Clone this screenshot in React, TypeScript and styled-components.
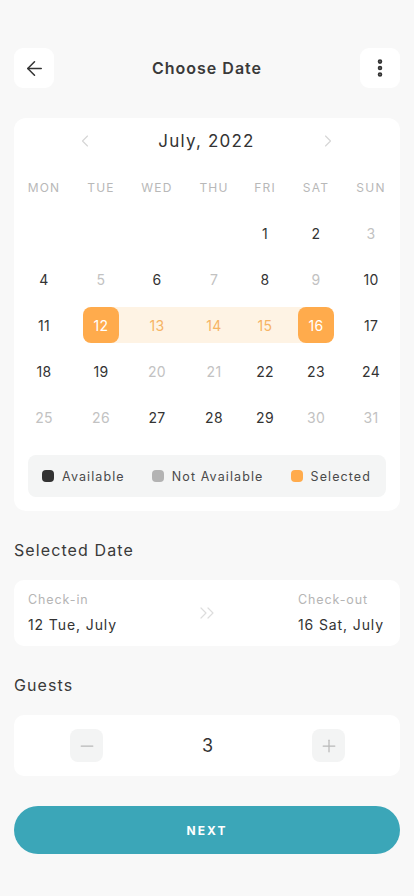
import * as React from 'react'
import styled, { createGlobalStyle } from 'styled-components'
import { ArrowLeft, EllipsisVertical, ChevronLeft, ChevronRight, ChevronsRight, Minus, Plus } from 'lucide-react'

const ORANGE = '#ffab4c'
const BAND = '#fef3e4'
const TEXT = '#333333'

const COLUMNS = '48px 66px 46px 68px 34px 68px 42px'

const GlobalStyle = createGlobalStyle`
    html, body {
        margin: 0;
        padding: 0;
        background: #f8f8f8;
    }
    * {
        box-sizing: border-box;
    }
`

const Page = styled.div`
    width: 414px;
    min-height: 896px;
    padding: 48px 14px 40px 14px;
    font-family: Inter, "Noto Sans", sans-serif;
    color: ${TEXT};
    background: #f8f8f8;
`

const TopBar = styled.div`
    display: flex;
    align-items: center;
    justify-content: space-between;
    height: 40px;
`

const IconButton = styled.button`
    width: 40px;
    height: 40px;
    border: none;
    border-radius: 9px;
    background: #fff;
    display: flex;
    align-items: center;
    justify-content: center;
    padding: 0;
    color: ${TEXT};
`

const Title = styled.div`
    font-size: 16px;
    font-weight: 600;
    letter-spacing: 1px;
    color: #3a3a3a;
`

const Card = styled.div`
    background: #fff;
    border-radius: 12px;
`

const CalendarCard = styled(Card)`
    margin-top: 30px;
    padding: 0 8px 14px 6px;
`

const MonthBar = styled.div`
    height: 46px;
    display: flex;
    align-items: center;
    justify-content: space-between;
    padding: 0 54px 0 55px;
    color: #d6d6d6;
`

const MonthLabel = styled.div`
    font-size: 17px;
    font-weight: 400;
    letter-spacing: 1.2px;
    color: ${TEXT};
`

const Grid = styled.div`
    display: grid;
    grid-template-columns: ${COLUMNS};
    grid-auto-rows: 46px;
`

const WeekDay = styled.div`
    display: flex;
    align-items: center;
    justify-content: center;
    font-size: 12px;
    letter-spacing: 1.2px;
    color: #b8b8b8;
`

type Band = 'none' | 'full' | 'start' | 'end'

const DayCell = styled.div<{ $band: Band }>`
    display: flex;
    align-items: center;
    justify-content: center;
    background-image: linear-gradient(${BAND}, ${BAND});
    background-repeat: no-repeat;
    background-size: ${p => p.$band === 'none' ? '0 0' : p.$band === 'full' ? '100% 36px' : '50% 36px'};
    background-position: ${p => p.$band === 'start' ? 'right center' : p.$band === 'end' ? 'left center' : 'center'};
`

type Tone = 'normal' | 'dim' | 'range' | 'picked'

const DayNum = styled.div<{ $tone: Tone }>`
    width: 36px;
    height: 36px;
    border-radius: 8px;
    display: flex;
    align-items: center;
    justify-content: center;
    font-size: 14px;
    font-weight: 400;
    letter-spacing: 0.3px;
    background: ${p => p.$tone === 'picked' ? ORANGE : 'transparent'};
    color: ${p => p.$tone === 'picked' ? '#fff' : p.$tone === 'range' ? '#f6b464' : p.$tone === 'dim' ? '#c2c2c2' : TEXT};
`

const Legend = styled.div`
    margin: 15px 6px 0 8px;
    height: 42px;
    border-radius: 8px;
    background: #f4f5f5;
    display: flex;
    align-items: center;
    justify-content: space-between;
    padding: 0 15px 0 14px;
`

const LegendItem = styled.div`
    display: flex;
    align-items: center;
    gap: 8px;
    font-size: 12.5px;
    letter-spacing: 1.1px;
    color: #4a4a4a;
`

const Dot = styled.span<{ $color: string }>`
    width: 12px;
    height: 12px;
    border-radius: 4px;
    background: ${p => p.$color};
`

const SectionTitle = styled.div`
    margin-top: 29px;
    height: 20px;
    line-height: 20px;
    font-size: 16px;
    font-weight: 400;
    letter-spacing: 1.1px;
    color: #3a3a3a;
`

const DatesCard = styled(Card)`
    margin-top: 20px;
    height: 66px;
    border-radius: 10px;
    padding: 0 16px 0 14px;
    display: flex;
    align-items: center;
    justify-content: space-between;
`

const DateBlock = styled.div`
    display: flex;
    flex-direction: column;
    gap: 9px;
`

const DateLabel = styled.div`
    font-size: 12.5px;
    line-height: 14px;
    letter-spacing: 0.9px;
    color: #b5b5b5;
`

const DateValue = styled.div`
    font-size: 14px;
    line-height: 18px;
    letter-spacing: 0.9px;
    color: ${TEXT};
`

const ArrowsIcon = styled.div`
    display: flex;
    color: #dddddd;
`

const GuestsCard = styled(Card)`
    margin-top: 20px;
    border-radius: 10px;
    padding: 14px 55px 14px 56px;
    display: flex;
    align-items: center;
    justify-content: space-between;
`

const StepButton = styled.button`
    width: 33px;
    height: 33px;
    border: none;
    border-radius: 8px;
    background: #f3f4f4;
    color: #b8b8b8;
    display: flex;
    align-items: center;
    justify-content: center;
    padding: 0;
`

const Count = styled.div`
    font-size: 18px;
    color: ${TEXT};
`

const NextButton = styled.button`
    margin-top: 30px;
    width: 100%;
    height: 48px;
    border: none;
    border-radius: 24px;
    background: #3ba6b8;
    color: #fff;
    font-family: Inter, "Noto Sans", sans-serif;
    font-size: 12px;
    font-weight: 700;
    letter-spacing: 2px;
`

const WEEK = ['MON', 'TUE', 'WED', 'THU', 'FRI', 'SAT', 'SUN']
const UNAVAILABLE = [3, 5, 7, 9, 20, 21, 25, 26, 30, 31]
const CHECK_IN = 12
const CHECK_OUT = 16
const FIRST_OFFSET = 4 // July 1st 2022 is a Friday

const cells: (number | null)[] = [
    ...Array(FIRST_OFFSET).fill(null),
    ...Array.from({ length: 31 }, (_, i) => i + 1),
]

const toneFor = (d: number): Tone => {
    if (d === CHECK_IN || d === CHECK_OUT) return 'picked'
    if (d > CHECK_IN && d < CHECK_OUT) return 'range'
    if (UNAVAILABLE.includes(d)) return 'dim'
    return 'normal'
}

const bandFor = (d: number): Band => {
    if (d === CHECK_IN) return 'start'
    if (d === CHECK_OUT) return 'end'
    if (d > CHECK_IN && d < CHECK_OUT) return 'full'
    return 'none'
}

export default function App() {
    return (
        <Page>
            <GlobalStyle />
            <TopBar>
                <IconButton aria-label="Back">
                    <ArrowLeft size={23} strokeWidth={1.6} />
                </IconButton>
                <Title>Choose Date</Title>
                <IconButton aria-label="More">
                    <EllipsisVertical size={22} strokeWidth={3} />
                </IconButton>
            </TopBar>

            <CalendarCard>
                <MonthBar>
                    <ChevronLeft size={20} strokeWidth={1.4} />
                    <MonthLabel>July, 2022</MonthLabel>
                    <ChevronRight size={20} strokeWidth={1.4} />
                </MonthBar>
                <Grid>
                    {WEEK.map(w => <WeekDay key={w}>{w}</WeekDay>)}
                    {cells.map((d, i) =>
                        d === null
                            ? <DayCell key={'e' + i} $band="none" />
                            : (
                                <DayCell key={d} $band={bandFor(d)}>
                                    <DayNum $tone={toneFor(d)}>{d}</DayNum>
                                </DayCell>
                            )
                    )}
                </Grid>
                <Legend>
                    <LegendItem><Dot $color="#333" />Available</LegendItem>
                    <LegendItem><Dot $color="#b3b3b3" />Not Available</LegendItem>
                    <LegendItem><Dot $color={ORANGE} />Selected</LegendItem>
                </Legend>
            </CalendarCard>

            <SectionTitle>Selected Date</SectionTitle>
            <DatesCard>
                <DateBlock>
                    <DateLabel>Check-in</DateLabel>
                    <DateValue>12 Tue, July</DateValue>
                </DateBlock>
                <ArrowsIcon>
                    <ChevronsRight size={24} strokeWidth={1.2} />
                </ArrowsIcon>
                <DateBlock>
                    <DateLabel>Check-out</DateLabel>
                    <DateValue>16 Sat, July</DateValue>
                </DateBlock>
            </DatesCard>

            <SectionTitle>Guests</SectionTitle>
            <GuestsCard>
                <StepButton aria-label="Less">
                    <Minus size={20} strokeWidth={1.5} />
                </StepButton>
                <Count>3</Count>
                <StepButton aria-label="More">
                    <Plus size={20} strokeWidth={1.5} />
                </StepButton>
            </GuestsCard>

            <NextButton>NEXT</NextButton>
        </Page>
    )
}
